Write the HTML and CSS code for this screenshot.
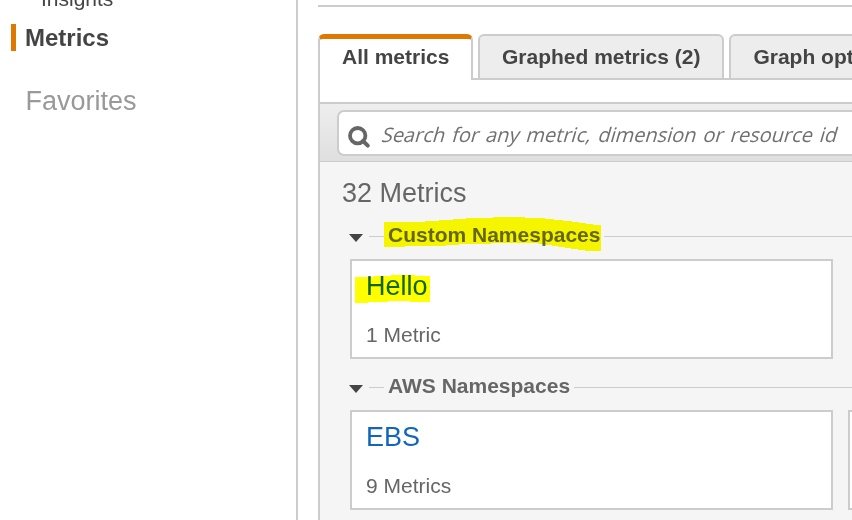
FILE: index.html
```html
<!DOCTYPE html>
<html lang="en">
<head>
<meta charset="utf-8">
<title>CloudWatch Metrics</title>
<link rel="stylesheet" href="styles.css">
</head>
<body>
<div class="app">
  <nav class="sidebar">
    <a class="sub-item">Insights</a>
    <a class="nav-item">Metrics</a>
    <div class="favorites">Favorites</div>
  </nav>
  <main class="main">
    <div class="tabs">
      <div class="tab active">All metrics</div>
      <div class="tab">Graphed metrics (2)</div>
      <div class="tab">Graph options</div>
    </div>
    <section class="panel">
      <div class="toolbar">
        <div class="search">
          <svg class="search-icon" viewBox="0 0 24 24" width="24" height="24"><circle cx="10.7" cy="10.7" r="7.7" fill="none" stroke="#666" stroke-width="3.8"/><path d="M16 16l4.8 4.6" stroke="#666" stroke-width="4" stroke-linecap="round"/></svg>
          <span class="placeholder">Search for any metric, dimension or resource id</span>
        </div>
      </div>
      <div class="content">
        <h1>32 Metrics</h1>
        <div class="group-head">
          <i class="caret"></i><i class="dash"></i>
          <h2>Custom Namespaces<svg class="mark mark-title" viewBox="0 0 218 36" width="218" height="36"><path d="M0 5H41V4H55V3H69V2H82V1H109V0H141V1H161V2H170V3H179V4H188V5H195V6H202V7H209V8H217V34H201V33H194V32H187V31H181V30H174V29H168V28H161V27H154V26H107V27H75V28H62V29H21V30H0Z" fill="#ff0"/></svg></h2>
          <i class="rule"></i>
        </div>
        <div class="cards">
          <div class="card"><a>Hello<svg class="mark mark-name" viewBox="0 0 75 28" width="75" height="28"><path d="M0 2H19V1H36V0H60V1H75V27H55V26H33V27H13V28H0Z" fill="#ff0"/></svg></a><p>1 Metric</p></div>
        </div>
        <div class="group-head">
          <i class="caret"></i><i class="dash"></i>
          <h2>AWS Namespaces</h2>
          <i class="rule"></i>
        </div>
        <div class="cards">
          <div class="card"><a>EBS</a><p>9 Metrics</p></div>
          <div class="card"></div>
        </div>
      </div>
    </section>
  </main>
</div>
</body>
</html>
```
FILE: styles.css
```css
* { box-sizing: border-box; }
body {
  margin: 0;
  background: #fff;
  color: #444;
  font-family: "Liberation Sans", Arial, sans-serif;
  font-size: 21px;
  overflow: hidden;
}
.app { display: flex; width: 852px; height: 520px; overflow: hidden; }

.sidebar { flex: none; width: 298px; border-right: 2px solid #ccc; }
.sub-item { display: block; height: 24px; margin: -13px 0 0 41px; line-height: 24px; }
.nav-item {
  display: block;
  height: 27px;
  margin: 13px 0 0 11px;
  padding-left: 9px;
  border-left: 5px solid #e07700;
  font-size: 24px;
  font-weight: bold;
  line-height: 27px;
}
.favorites { margin: 34px 0 0 25.5px; color: #999; font-size: 27px; line-height: 32px; }

.main { flex: none; width: 634px; margin: 5px 0 0 20px; border-top: 2px solid #ccc; }
.tabs { display: flex; height: 46px; margin-top: 27px; background: linear-gradient(#ccc, #ccc) 0 100% / 100% 2px no-repeat; }
.tab {
  height: 46px;
  margin-right: 5px;
  padding: 0 22px;
  border: 2px solid #ccc;
  border-radius: 6px 6px 0 0;
  background: #ededed;
  font-weight: bold;
  line-height: 41px;
  white-space: nowrap;
}
.tab.active {
  width: 155px;
  border-top: 5px solid #e07700;
  border-bottom: 0;
  background: #fff;
  line-height: 35px;
}
.panel { height: 442px; padding-top: 22px; border-left: 2px solid #ccc; }
.toolbar {
  height: 60px;
  padding: 6px 0 0 17px;
  border-top: 2px solid #ccc;
  border-bottom: 1px solid #ccc;
  background: linear-gradient(#eee, #dfdfdf);
}
.search {
  display: flex;
  height: 46px;
  border: 2px solid #ccc;
  border-radius: 7px;
  background: #fff;
}
.search-icon { flex: none; margin: 13px 0 0 8px; }
.placeholder {
  margin-left: 12px;
  color: #707070;
  font-family: "Open Sans", sans-serif;
  font-size: 20px;
  line-height: 45px;
  word-spacing: 1.8px;
  white-space: nowrap;
  transform: skewX(-16deg);
}
.content { height: 360px; background: #f5f5f5; color: #666; }
h1 { height: 59px; margin: 0; padding: 15px 0 0 22px; font-size: 27px; font-weight: normal; line-height: 32px; }
.group-head { display: flex; align-items: center; height: 30px; padding-left: 29px; }
.caret { margin-top: 3px; border: 7px solid transparent; border-top: 8px solid #444; border-bottom: 0; }
.dash { width: 15px; height: 1px; margin-left: 6px; background: #ccc; }
h2 { position: relative; margin: 0 4px 2px; font-size: 21px; line-height: 26px; white-space: nowrap; }
.rule { flex: 1; height: 1px; background: #ccc; }
.mark { position: absolute; mix-blend-mode: multiply; }
.mark-title { left: -4px; top: -5px; }
.mark-name { left: -11px; top: 5px; }
.cards { display: flex; gap: 15px; height: 121px; padding: 8px 0 0 30px; }
.card {
  flex: none;
  width: 483px;
  height: 100px;
  padding: 9px 14px;
  border: 2px solid #ccc;
  background: #fff;
}
.card a { position: relative; display: inline-block; color: #1166bb; font-size: 27px; line-height: 32px; }
.card p { margin: 21px 0 0; line-height: 24px; }
```
